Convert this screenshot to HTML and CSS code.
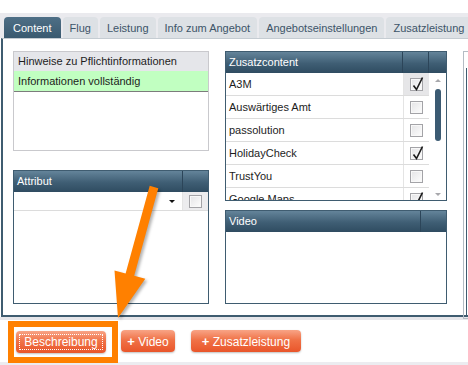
FILE: index.html
```html
<!DOCTYPE html>
<html lang="de">
<head>
    <meta charset="UTF-8">
    <title>Content</title>
    <link rel="stylesheet" href="styles.css">
</head>
<body>
    <div class="page">
        <div class="topbar"></div>

        <div class="tabstrip">
            <div class="tab active">Content</div>
            <div class="tab">Flug</div>
            <div class="tab">Leistung</div>
            <div class="tab">Info zum Angebot</div>
            <div class="tab">Angebotseinstellungen</div>
            <div class="tab">Zusatzleistung</div>
        </div>

        <div class="panel">
            <div class="col col-left">
                <div class="notes">
                    <div class="notes-head">Hinweise zu Pflichtinformationen</div>
                    <div class="notes-ok">Informationen vollständig</div>
                </div>

                <div class="grid attr">
                    <div class="grid-head">
                        <div class="head-cell head-main">Attribut</div>
                        <div class="head-cell head-check"></div>
                    </div>
                    <div class="row">
                        <div class="cell-main select-cell"><span class="caret"></span></div>
                        <div class="cell-check plain"><span class="box"></span></div>
                    </div>
                </div>
            </div>

            <div class="col col-mid">
                <div class="grid extras">
                    <div class="grid-head">
                        <div class="head-cell head-main">Zusatzcontent</div>
                        <div class="head-cell head-check"></div>
                        <div class="head-cell head-scroll"></div>
                    </div>
                    <div class="extras-body">
                        <div class="rows">
                            <div class="row">
                                <div class="cell-main">A3M</div>
                                <div class="cell-check hover"><span class="box checked"><svg viewBox="0 0 13 13"><path d="M2.5 6.5 L5.5 10.5 L11.5 -1.5" /></svg></span></div>
                            </div>
                            <div class="row">
                                <div class="cell-main">Auswärtiges Amt</div>
                                <div class="cell-check"><span class="box"></span></div>
                            </div>
                            <div class="row">
                                <div class="cell-main">passolution</div>
                                <div class="cell-check"><span class="box"></span></div>
                            </div>
                            <div class="row">
                                <div class="cell-main">HolidayCheck</div>
                                <div class="cell-check"><span class="box checked"><svg viewBox="0 0 13 13"><path d="M2.5 6.5 L5.5 10.5 L11.5 -1.5" /></svg></span></div>
                            </div>
                            <div class="row">
                                <div class="cell-main">TrustYou</div>
                                <div class="cell-check"><span class="box"></span></div>
                            </div>
                            <div class="row">
                                <div class="cell-main">Google Maps</div>
                                <div class="cell-check"><span class="box checked"><svg viewBox="0 0 13 13"><path d="M2.5 6.5 L5.5 10.5 L11.5 -1.5" /></svg></span></div>
                            </div>
                        </div>
                        <div class="scroll">
                            <span class="arrow-up"></span>
                            <span class="thumb"></span>
                            <span class="arrow-down"></span>
                        </div>
                    </div>
                </div>

                <div class="grid video">
                    <div class="grid-head">
                        <div class="head-cell head-main">Video</div>
                        <div class="head-cell head-check"></div>
                    </div>
                </div>
            </div>

            <div class="col col-side">
                <div class="side-inner"></div>
            </div>
        </div>

        <div class="sep"></div>

        <div class="actions">
            <div class="highlight">
                <button class="btn btn-focus">Beschreibung</button>
            </div>
            <button class="btn btn-video"><b>+</b> Video</button>
            <button class="btn btn-extra"><b>+</b> Zusatzleistung</button>
        </div>

        <div class="footer"></div>

        <!-- annotation arrow -->
        <svg class="pointer" width="468" height="365" viewBox="0 0 468 365">
            <polygon points="149.7,185.8 158.3,188.2 134.2,275.8 145.3,278.8 118,318 114.5,270.4 125.6,273.4" />
        </svg>
    </div>
</body>
</html>
```

FILE: styles.css
```css
body {
    margin: 0;
    background: white;
    font-family: "Liberation Sans", Arial, sans-serif;
    font-size: 11px;
    color: #1d1d1d;
}

.page {
    position: relative;
    width: 468px;
    height: 365px;
    overflow: hidden;
}

.topbar {
    height: 13px;
    background: white;
}

/* tabs */
.tabstrip {
    height: 25px;
    display: flex;
    align-items: flex-end;
    gap: 2px;
    padding-left: 4px;
    background: #eaeaee;
    white-space: nowrap;
}

.tab {
    flex: none;
    height: 21px;
    line-height: 22px;
    padding: 0 7px;
    font-size: 11px;
    color: #3c5468;
    background: #dde1e5;
    border-radius: 4px 4px 0 0;
}

.tab.active {
    padding: 0 9px;
    color: white;
    background: linear-gradient(#4e6f86, #3a5a70);
}

/* main panel */
.panel {
    width: 540px;
    height: 253px;
    margin-left: 1px;
    padding: 12px 0 11px 10px;
    display: flex;
    gap: 16px;
    background: white;
    border: 2px solid #3f5c70;
    border-top: 1px solid #c5ccd2;
}

.col {
    flex: none;
    display: flex;
    flex-direction: column;
}

.col-left {
    width: 196px;
    gap: 19px;
}

.col-mid {
    width: 222px;
    gap: 9px;
}

.col-side {
    width: 80px;
    height: 250px;
    padding: 16px 0 0 2px;
    border: 1px solid #b4bcc4;
    border-right: none;
}

.side-inner {
    flex: 1;
    margin-bottom: 2px;
    border-left: 1px solid #3f5c70;
    border-bottom: 1px solid #3f5c70;
}

/* Hinweise */
.notes {
    height: 98px;
    border: 1px solid #c9c9cd;
}

.notes-head {
    height: 19px;
    line-height: 19px;
    padding-left: 4px;
    background: #e5e6ea;
}

.notes-ok {
    height: 20px;
    line-height: 20px;
    padding-left: 4px;
    background: #c1ffc1;
    border-bottom: 1px solid #7c7c7c;
}

/* grids */
.grid {
    border: 1px solid #3f5c70;
    background: white;
    overflow: hidden;
}

.attr {
    height: 132px;
}

.extras {
    height: 148px;
}

.video {
    height: 92px;
}

.grid-head {
    display: flex;
    height: 21px;
    background: linear-gradient(#64849a, #3f5e74 55%, #2f4c61);
    color: white;
}

.head-cell {
    line-height: 20px;
}

.head-main {
    flex: 1;
    padding-left: 3px;
}

.head-check {
    width: 25px;
    border-left: 1px solid #2c4559;
}

.head-scroll {
    width: 17px;
    border-left: 1px solid #2c4559;
}

.extras-body {
    display: flex;
    height: 127px;
}

.rows {
    flex: 1;
    overflow: hidden;
}

.row {
    display: flex;
    height: 22px;
    border-bottom: 1px solid #dcdcdc;
}

.attr .row {
    height: 18px;
}

.cell-main {
    flex: 1;
    padding-left: 3px;
    line-height: 22px;
}

.cell-check {
    width: 25px;
    border-left: 1px solid #e4e4e4;
    display: flex;
    align-items: center;
    justify-content: center;
}

.cell-check.hover {
    background: #e6e6e8;
}

.cell-check.plain {
    background: #ececee;
}

.select-cell {
    display: flex;
    align-items: center;
    justify-content: flex-end;
    padding-right: 7px;
}

.caret {
    width: 0;
    height: 0;
    border-left: 3px solid transparent;
    border-right: 3px solid transparent;
    border-top: 3px solid #111;
}

.box {
    position: relative;
    width: 11px;
    height: 11px;
    border: 1px solid #a3a3a7;
    background: linear-gradient(135deg, #e4e4e6, #fdfdfd);
    box-shadow: inset 0 0 0 1px #f8f8f8;
}

.box svg {
    position: absolute;
    left: 0;
    top: 0;
    width: 13px;
    height: 13px;
    overflow: visible;
}

.box path {
    fill: none;
    stroke: #1a1a1a;
    stroke-width: 1.6;
}

/* scrollbar */
.scroll {
    width: 17px;
    display: flex;
    flex-direction: column;
    align-items: center;
    padding-top: 6px;
}

.arrow-up {
    width: 0;
    height: 0;
    border-left: 3px solid transparent;
    border-right: 3px solid transparent;
    border-bottom: 3px solid #a8a8ac;
}

.thumb {
    width: 6px;
    height: 52px;
    margin-top: 7px;
    margin-left: 1px;
    border-radius: 3px;
    background: #3b5a72;
}

.arrow-down {
    width: 0;
    height: 0;
    margin-top: auto;
    margin-bottom: 4px;
    border-left: 3px solid transparent;
    border-right: 3px solid transparent;
    border-top: 3px solid #a8a8ac;
}

/* bottom */
.sep {
    height: 3px;
    background: #e6e6ea;
}

.actions {
    height: 42px;
    display: flex;
    align-items: center;
    padding-left: 8px;
}

.highlight {
    display: flex;
    margin-top: 1px;
    padding: 4px 6px 4px 2px;
    border: 6px solid #ff8000;
}

.btn {
    height: 22px;
    padding: 0;
    border: none;
    border-radius: 4px;
    font-family: "Liberation Sans", Arial, sans-serif;
    font-size: 12px;
    color: white;
    background: linear-gradient(#f8a486, #f07247 45%, #e9552a);
    box-shadow: 0 1px 2px rgb(0 0 0 / 0.25);
}

.btn b {
    font-size: 13px;
}

.btn-focus {
    width: 90px;
    outline: 1px dotted white;
    outline-offset: -4px;
}

.btn-video {
    width: 54px;
    margin-left: 3px;
}

.btn-extra {
    width: 110px;
    margin-left: 16px;
}

.footer {
    height: 10px;
    background: #ececf0;
}

.pointer {
    position: absolute;
    left: 0;
    top: 0;
    pointer-events: none;
    filter: drop-shadow(2px 2px 1.5px rgb(0 0 0 / 0.3));
}

.pointer polygon {
    fill: #ff8000;
}
```
